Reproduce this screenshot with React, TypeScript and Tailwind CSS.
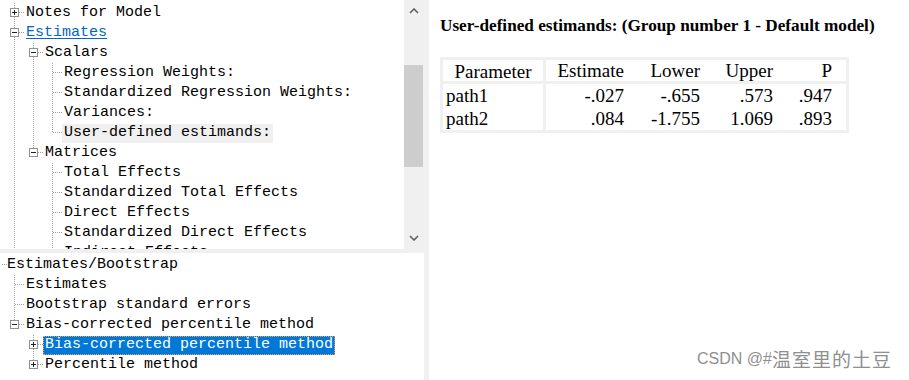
import type { ReactNode } from "react";

type Box = "+" | "-" | null;

type Row = {
  anc: boolean[];
  top: boolean;
  bottom: boolean;
  box: Box;
  label: ReactNode;
  variant?: "link" | "soft" | "selected";
};

const LINE = "#a0a0a0";

function Cell({ line }: { line: boolean }) {
  return (
    <svg width="19" height="20" className="shrink-0" shapeRendering="crispEdges">
      {line && <line x1="9.5" y1="0" x2="9.5" y2="20" stroke={LINE} strokeDasharray="1 1" />}
    </svg>
  );
}

function Own({ top, bottom, box }: { top: boolean; bottom: boolean; box: Box }) {
  return (
    <svg width="19" height="20" className="shrink-0" shapeRendering="crispEdges">
      {top && <line x1="9.5" y1="0" x2="9.5" y2="10" stroke={LINE} strokeDasharray="1 1" />}
      {bottom && <line x1="9.5" y1="10" x2="9.5" y2="20" stroke={LINE} strokeDasharray="1 1" />}
      <line x1="10" y1="9.5" x2="19" y2="9.5" stroke={LINE} strokeDasharray="1 1" />
      {box && (
        <g>
          <rect x="5.5" y="5.5" width="8" height="8" fill="#fff" stroke="#919191" />
          <line x1="7" y1="9.5" x2="12" y2="9.5" stroke="#222" />
          {box === "+" && <line x1="9.5" y1="7" x2="9.5" y2="12" stroke="#222" />}
        </g>
      )}
    </svg>
  );
}

function TreeRow({ row }: { row: Row }) {
  let cls = "pl-[2px] pr-[2px]";
  if (row.variant === "link") cls += " text-[#0066cc] underline underline-offset-2";
  if (row.variant === "soft") cls += " bg-[#f0f0f0] h-[19px] flex items-center";
  if (row.variant === "selected")
    cls = "pl-[1px] pr-[1px] bg-[#0078d7] text-white border border-dotted border-[#f5a040] h-[19px] flex items-center";
  return (
    <div className="flex h-[20px] items-center whitespace-nowrap">
      {row.anc.map((a, i) => (
        <Cell key={i} line={a} />
      ))}
      <Own top={row.top} bottom={row.bottom} box={row.box} />
      <span className={cls}>{row.label}</span>
    </div>
  );
}

const topRows: Row[] = [
  { anc: [], top: true, bottom: true, box: "+", label: "Notes for Model" },
  { anc: [], top: true, bottom: true, box: "-", label: "Estimates", variant: "link" },
  { anc: [true], top: true, bottom: true, box: "-", label: "Scalars" },
  { anc: [true, true], top: true, bottom: true, box: null, label: "Regression Weights:" },
  { anc: [true, true], top: true, bottom: true, box: null, label: "Standardized Regression Weights:" },
  { anc: [true, true], top: true, bottom: true, box: null, label: "Variances:" },
  { anc: [true, true], top: true, bottom: false, box: null, label: "User-defined estimands:", variant: "soft" },
  { anc: [true], top: true, bottom: false, box: "-", label: "Matrices" },
  { anc: [true, false], top: true, bottom: true, box: null, label: "Total Effects" },
  { anc: [true, false], top: true, bottom: true, box: null, label: "Standardized Total Effects" },
  { anc: [true, false], top: true, bottom: true, box: null, label: "Direct Effects" },
  { anc: [true, false], top: true, bottom: true, box: null, label: "Standardized Direct Effects" },
  { anc: [true, false], top: true, bottom: true, box: null, label: "Indirect Effects" },
];

const bottomRows: Row[] = [
  { anc: [], top: true, bottom: true, box: null, label: "Estimates" },
  { anc: [], top: true, bottom: true, box: null, label: "Bootstrap standard errors" },
  { anc: [], top: true, bottom: false, box: "-", label: "Bias-corrected percentile method" },
  { anc: [false], top: true, bottom: true, box: "+", label: "Bias-corrected percentile method", variant: "selected" },
  { anc: [false], top: true, bottom: false, box: "+", label: "Percentile method" },
];

const results = [
  { name: "path1", est: "-.027", lower: "-.655", upper: ".573", p: ".947" },
  { name: "path2", est: ".084", lower: "-1.755", upper: "1.069", p: ".893" },
];

function Chevron({ down }: { down?: boolean }) {
  return (
    <svg width="10" height="6" viewBox="0 0 10 6">
      <polyline
        points={down ? "1,1 5,5 9,1" : "1,5 5,1 9,5"}
        fill="none"
        stroke="#606060"
        strokeWidth="1.6"
      />
    </svg>
  );
}

export default function App() {
  const mono = { fontFamily: '"Liberation Mono", "DejaVu Sans Mono", monospace' };
  const serif = { fontFamily: '"Liberation Serif", "Times New Roman", serif' };

  return (
    <div className="flex h-[380px] w-[909px] overflow-hidden bg-white text-black">
      {/* left: navigation trees */}
      <div className="flex w-[424px] shrink-0 flex-col text-[15px]" style={mono}>
        <div className="flex h-[249px] shrink-0">
          <div className="flex-1 overflow-hidden pl-[5px] pt-[3px]">
            {topRows.map((r, i) => (
              <TreeRow key={i} row={r} />
            ))}
          </div>
          <div className="flex w-[20px] flex-col bg-[#f0f0f0]">
            <div className="flex h-[22px] items-center justify-center">
              <Chevron />
            </div>
            <div className="h-[43px]" />
            <div className="h-[102px] w-[19px] bg-[#cdcdcd]" />
            <div className="flex-1" />
            <div className="flex h-[22px] items-center justify-center">
              <Chevron down />
            </div>
          </div>
        </div>
        <div className="h-[4px] shrink-0 bg-[#f0f0f0]" />
        <div className="flex-1 overflow-hidden pl-[5px] pt-[2px]">
          <div className="-ml-[3px] flex h-[20px] items-center whitespace-nowrap">
            <svg width="5" height="20" shapeRendering="crispEdges">
              <line x1="0" y1="9.5" x2="5" y2="9.5" stroke={LINE} strokeDasharray="1 1" />
            </svg>
            <span>Estimates/Bootstrap</span>
          </div>
          {bottomRows.map((r, i) => (
            <TreeRow key={i} row={r} />
          ))}
        </div>
      </div>

      <div className="w-[5px] shrink-0 bg-[#f0f0f0]" />

      {/* right: output */}
      <div className="relative flex-1 pl-[11px] pt-[16px]" style={serif}>
        <h2 className="text-[17.2px] font-bold leading-[20px]">
          User-defined estimands: (Group number 1 - Default model)
        </h2>
        <div className="mt-[21px] w-[409px] border-[3px] border-[#f0f0f0] text-[19px]">
          <div className="flex h-[24px] items-center border-b-[3px] border-[#f0f0f0] leading-[24px]">
            <div className="h-full w-[103px] border-r-[3px] border-[#f0f0f0] text-center">Parameter</div>
            <div className="w-[86px] pr-[8px] text-right">Estimate</div>
            <div className="w-[76px] pr-[8px] text-right">Lower</div>
            <div className="w-[73px] pr-[8px] text-right">Upper</div>
            <div className="w-[62px] pr-[11px] text-right">P</div>
          </div>
          <div className="flex">
            <div className="w-[103px] border-r-[3px] border-[#f0f0f0] pl-[3px]">
              {results.map((r) => (
                <div key={r.name} className="h-[23px] leading-[23px]">
                  {r.name}
                </div>
              ))}
            </div>
            <div className="flex-1">
              {results.map((r) => (
                <div key={r.name} className="flex h-[23px] leading-[23px]">
                  <div className="w-[86px] pr-[8px] text-right">{r.est}</div>
                  <div className="w-[76px] pr-[8px] text-right">{r.lower}</div>
                  <div className="w-[73px] pr-[8px] text-right">{r.upper}</div>
                  <div className="w-[62px] pr-[11px] text-right">{r.p}</div>
                </div>
              ))}
            </div>
          </div>
        </div>

        <div
          className="absolute bottom-[7px] right-[17px] flex items-center text-[#8f8f8f]"
          style={{ fontFamily: '"Liberation Sans", Arial, "Noto Sans CJK SC", sans-serif' }}
        >
          <span className="text-[16px]">CSDN @#</span>
          <span className="text-[19px] tracking-[1px]" style={{ fontFamily: '"Noto Sans CJK SC", sans-serif' }}>
            温室里的土豆
          </span>
        </div>
      </div>
    </div>
  );
}
